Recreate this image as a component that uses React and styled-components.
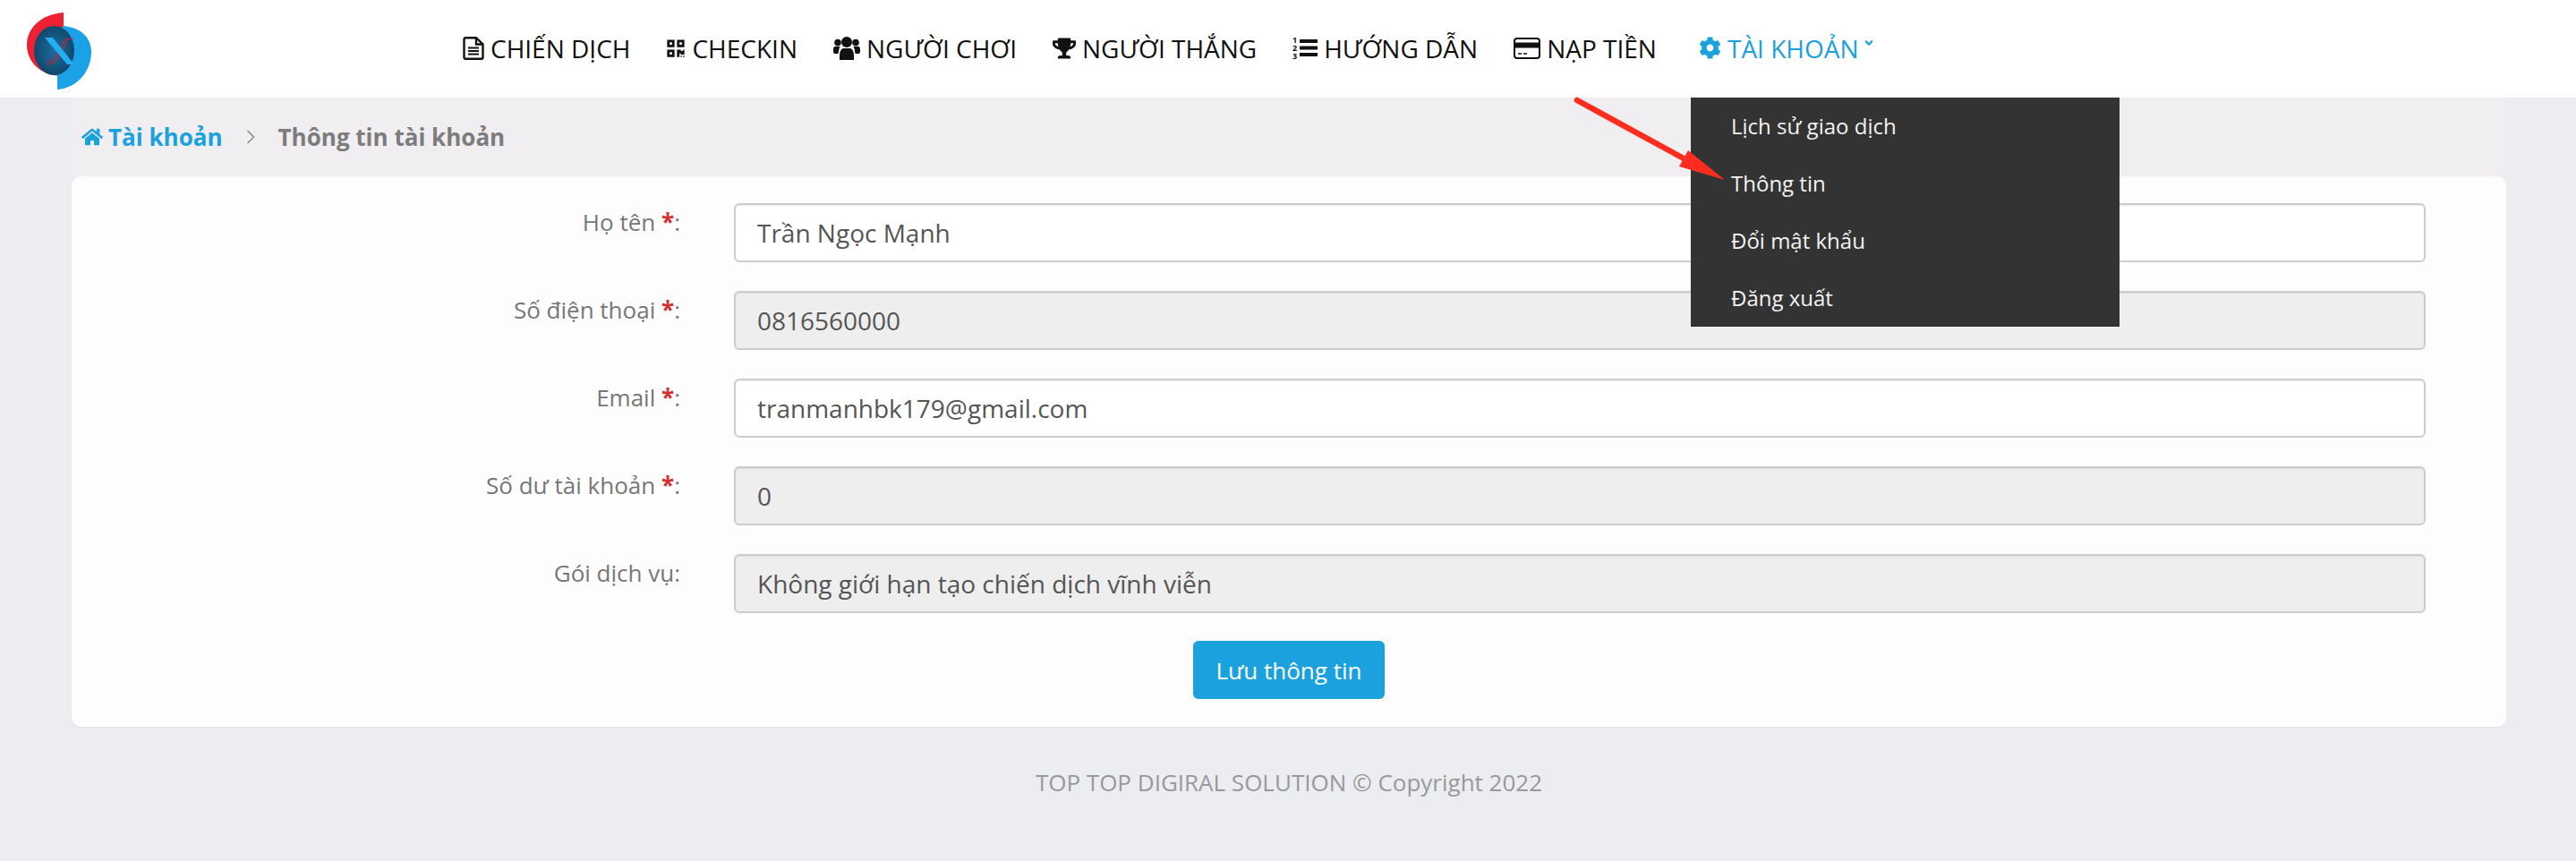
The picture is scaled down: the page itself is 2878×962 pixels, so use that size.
import React from "react";
import styled, { createGlobalStyle } from "styled-components";
import { FaQrcode, FaTrophy, FaCog, FaHome, FaAngleDown } from "react-icons/fa";

const GlobalStyle = createGlobalStyle`
  html, body {
    margin: 0;
    padding: 0;
    background: #ecedf1;
    font-family: "Open Sans", "Noto Sans", sans-serif;
  }
  * { box-sizing: border-box; }
`;

const Page = styled.div`
  position: relative;
  width: 2878px;
  height: 962px;
  overflow: hidden;
  display: flex;
  flex-direction: column;
`;

const Header = styled.header`
  height: 109px;
  background: #fff;
  display: flex;
  align-items: center;
  padding-left: 30px;
  flex-shrink: 0;
`;

const Logo = styled.svg`
  margin-top: 5px;
`;

const Nav = styled.nav`
  display: flex;
  align-items: center;
  gap: 40px;
  margin: -2px 0 0 415px;
`;

const NavItem = styled.a`
  position: relative;
  display: flex;
  align-items: center;
  gap: 7px;
  margin-left: ${(p) => (p.$active ? "7px" : "0")};
  font-size: 28px;
  line-height: 40px;
  color: ${(p) => (p.$active ? "#1ba1de" : "#111")};
  white-space: nowrap;
  svg { flex-shrink: 0; }
`;

const Caret = styled(FaAngleDown)`
  margin-left: -3px;
  margin-top: -12px;
`;

const Dropdown = styled.ul`
  position: absolute;
  left: 1889px;
  top: 109px;
  width: 479px;
  height: 256px;
  margin: 0;
  padding: 0;
  list-style: none;
  background: #333;
  display: flex;
  flex-direction: column;
`;

const DropdownItem = styled.li`
  height: 64px;
  padding: 0 0 2px 45px;
  display: flex;
  align-items: center;
  color: #f2f2f2;
  font-size: 24px;
`;

const Content = styled.main`
  margin: 0 78px 0 80px;
  display: flex;
  flex-direction: column;
`;

const Breadcrumb = styled.div`
  height: 88px;
  background: #f0eef0;
  display: flex;
  align-items: center;
  padding-left: 11px;
  font-size: 26px;
  font-weight: 700;
`;

const Crumb = styled.span`
  display: flex;
  align-items: center;
  gap: 6px;
  color: ${(p) => (p.$link ? "#1ba1de" : "#7c7c7c")};
`;

const CrumbSep = styled.svg`
  margin: 0 26px 0 26px;
`;

const Card = styled.section`
  height: 615px;
  background: #fdfdfd;
  border-radius: 10px;
  padding: 30px 90px 0 0;
  box-shadow: 0 1px 2px rgba(0, 0, 0, 0.05);
  display: flex;
  flex-direction: column;
  gap: 32px;
`;

const Row = styled.div`
  display: flex;
  align-items: flex-start;
  gap: 60px;
`;

const Label = styled.label`
  width: 680px;
  flex-shrink: 0;
  padding-top: 3px;
  text-align: right;
  font-size: 26px;
  line-height: 36px;
  color: #777;
`;

const Required = styled.b`
  color: #d32f2f;
`;

const Input = styled.input`
  flex: 1;
  height: 66px;
  padding: 0 24px;
  border: 2px solid #ccc;
  border-radius: 6px;
  outline: none;
  background: ${(p) => (p.disabled ? "#eee" : "#fff")};
  box-shadow: inset 0 1px 1px rgba(0, 0, 0, 0.075);
  color: #555;
  opacity: 1;
  -webkit-text-fill-color: #555;
  font-family: inherit;
  font-size: 28px;
`;

const Actions = styled.div`
  display: flex;
  justify-content: center;
  margin: -1px -90px 0 0;
`;

const SaveButton = styled.button`
  width: 214px;
  height: 65px;
  border: 0;
  border-radius: 6px;
  background: #1ba1de;
  color: #fff;
  font-family: inherit;
  font-size: 26px;
`;

const Footer = styled.footer`
  margin-top: 44px;
  text-align: center;
  color: #999;
  font-size: 26px;
  line-height: 36px;
`;

const Arrow = styled.svg`
  position: absolute;
  left: 1750px;
  top: 105px;
  pointer-events: none;
`;

const LogoMark = () => (
  <Logo width="72" height="86" viewBox="0 0 72 86">
    <defs>
      <radialGradient id="globe" cx="50%" cy="50%" r="55%">
        <stop offset="0%" stopColor="#1c6d9f" />
        <stop offset="100%" stopColor="#0f4468" />
      </radialGradient>
    </defs>
    <path d="M41 0 C15 2 0 18 0 36 C0 55 15 71 41 71 Z" fill="#ee2033" />
    <path d="M34 86 C58 84 72 64 72 44 C72 28 60 16 40 15 L34 40 Z" fill="#1ba1e6" />
    <ellipse cx="30.5" cy="42.5" rx="22.5" ry="27.5" fill="url(#globe)" />
    <path d="M22 58 L31 56 L42 38 L45 30 L52 29 M22 55 L29 53 L39 37 L43 29" fill="none" stroke="#c02a40" strokeWidth="1.2" />
    <path d="M20 28 L29 28 L53 58 L45 58 Z" fill="#22aef0" />
  </Logo>
);

const FileIcon = () => (
  <svg width="24" height="26" viewBox="0 0 24 26">
    <path d="M1.5 3 Q1.5 1.2 3.3 1.2 H15 L22.5 8.5 V23 Q22.5 24.8 20.7 24.8 H3.3 Q1.5 24.8 1.5 23 Z M15 1.2 V8.5 H22.5" fill="none" stroke="#111" strokeWidth="2.4" />
    <path d="M6 12.5 H18 M6 16 H18 M6 19.5 H18" stroke="#111" strokeWidth="2" />
  </svg>
);

const UsersIcon = () => (
  <svg width="30" height="27" viewBox="0 0 30 27" fill="#111">
    <circle cx="15" cy="7" r="6" />
    <circle cx="5" cy="7.5" r="3.8" />
    <circle cx="25" cy="7.5" r="3.8" />
    <path d="M0 18 V15 Q0 11.8 3 11.8 H7.5 Q6 15 5.5 20 H2 Q0 20 0 18 Z" />
    <path d="M30 18 V15 Q30 11.8 27 11.8 H22.5 Q24 15 24.5 20 H28 Q30 20 30 18 Z" />
    <path d="M7 27 Q6.5 14.5 11 14 H19 Q23.5 14.5 23 27 Z" />
  </svg>
);

const ListIcon = () => (
  <svg width="28" height="32" viewBox="0 -2 28 32" fill="#111">
    <text x="0" y="8" fontSize="9" fontWeight="700" fontFamily="Open Sans">1</text>
    <text x="0" y="17" fontSize="9" fontWeight="700" fontFamily="Open Sans">2</text>
    <text x="0" y="26" fontSize="9" fontWeight="700" fontFamily="Open Sans">3</text>
    <rect x="8" y="4" width="20" height="4" />
    <rect x="8" y="11.5" width="20" height="4" />
    <rect x="8" y="19" width="20" height="4" />
  </svg>
);

const CardIcon = () => (
  <svg width="30" height="24" viewBox="0 0 30 24">
    <rect x="1" y="1" width="28" height="22" rx="3" fill="none" stroke="#111" strokeWidth="2" />
    <rect x="1" y="5.5" width="28" height="6" fill="#111" />
    <path d="M5 18 H9 M11 18 H15" stroke="#111" strokeWidth="1.6" />
  </svg>
);

const navItems = [
  { label: "CHIẾN DỊCH", icon: <FileIcon /> },
  { label: "CHECKIN", icon: <FaQrcode size={22} /> },
  { label: "NGƯỜI CHƠI", icon: <UsersIcon /> },
  { label: "NGƯỜI THẮNG", icon: <FaTrophy size={26} /> },
  { label: "HƯỚNG DẪN", icon: <ListIcon /> },
  { label: "NẠP TIỀN", icon: <CardIcon /> },
];

const menuItems = ["Lịch sử giao dịch", "Thông tin", "Đổi mật khẩu", "Đăng xuất"];

const fields = [
  { label: "Họ tên", required: true, value: "Trần Ngọc Mạnh" },
  { label: "Số điện thoại", required: true, value: "0816560000", disabled: true },
  { label: "Email", required: true, value: "tranmanhbk179@gmail.com" },
  { label: "Số dư tài khoản", required: true, value: "0", disabled: true },
  { label: "Gói dịch vụ", value: "Không giới hạn tạo chiến dịch vĩnh viễn", disabled: true },
];

const App = () => (
  <Page>
    <GlobalStyle />
    <Header>
      <LogoMark />
      <Nav>
        {navItems.map((item) => (
          <NavItem key={item.label}>
            {item.icon}
            {item.label}
          </NavItem>
        ))}
        <NavItem $active>
          <FaCog size={25} />
          TÀI KHOẢN
          <Caret size={14} />
        </NavItem>
      </Nav>
    </Header>
    <Content>
      <Breadcrumb>
        <Crumb $link>
          <FaHome size={24} />
          Tài khoản
        </Crumb>
        <CrumbSep width="10" height="18" viewBox="0 0 10 18">
          <path d="M1.5 2 L8.5 9 L1.5 16" fill="none" stroke="#888" strokeWidth="1.5" />
        </CrumbSep>
        <Crumb>Thông tin tài khoản</Crumb>
      </Breadcrumb>
      <Card>
        {fields.map((f) => (
          <Row key={f.label}>
            <Label>
              {f.label}
              {f.required && (
                <>
                  {" "}
                  <Required>*</Required>
                </>
              )}
              :
            </Label>
            <Input value={f.value} disabled={f.disabled} readOnly />
          </Row>
        ))}
        <Actions>
          <SaveButton>Lưu thông tin</SaveButton>
        </Actions>
      </Card>
      <Footer>TOP TOP DIGIRAL SOLUTION © Copyright 2022</Footer>
    </Content>
    <Dropdown>
      {menuItems.map((item) => (
        <DropdownItem key={item}>{item}</DropdownItem>
      ))}
    </Dropdown>
    <Arrow width="190" height="110" viewBox="0 0 190 110">
      <path d="M12 7 L131 72" stroke="#ff2d20" strokeWidth="6.5" strokeLinecap="round" />
      <path d="M177 96 L136 63 L126 81 Z" fill="#ff2d20" />
    </Arrow>
  </Page>
);

export default App;
